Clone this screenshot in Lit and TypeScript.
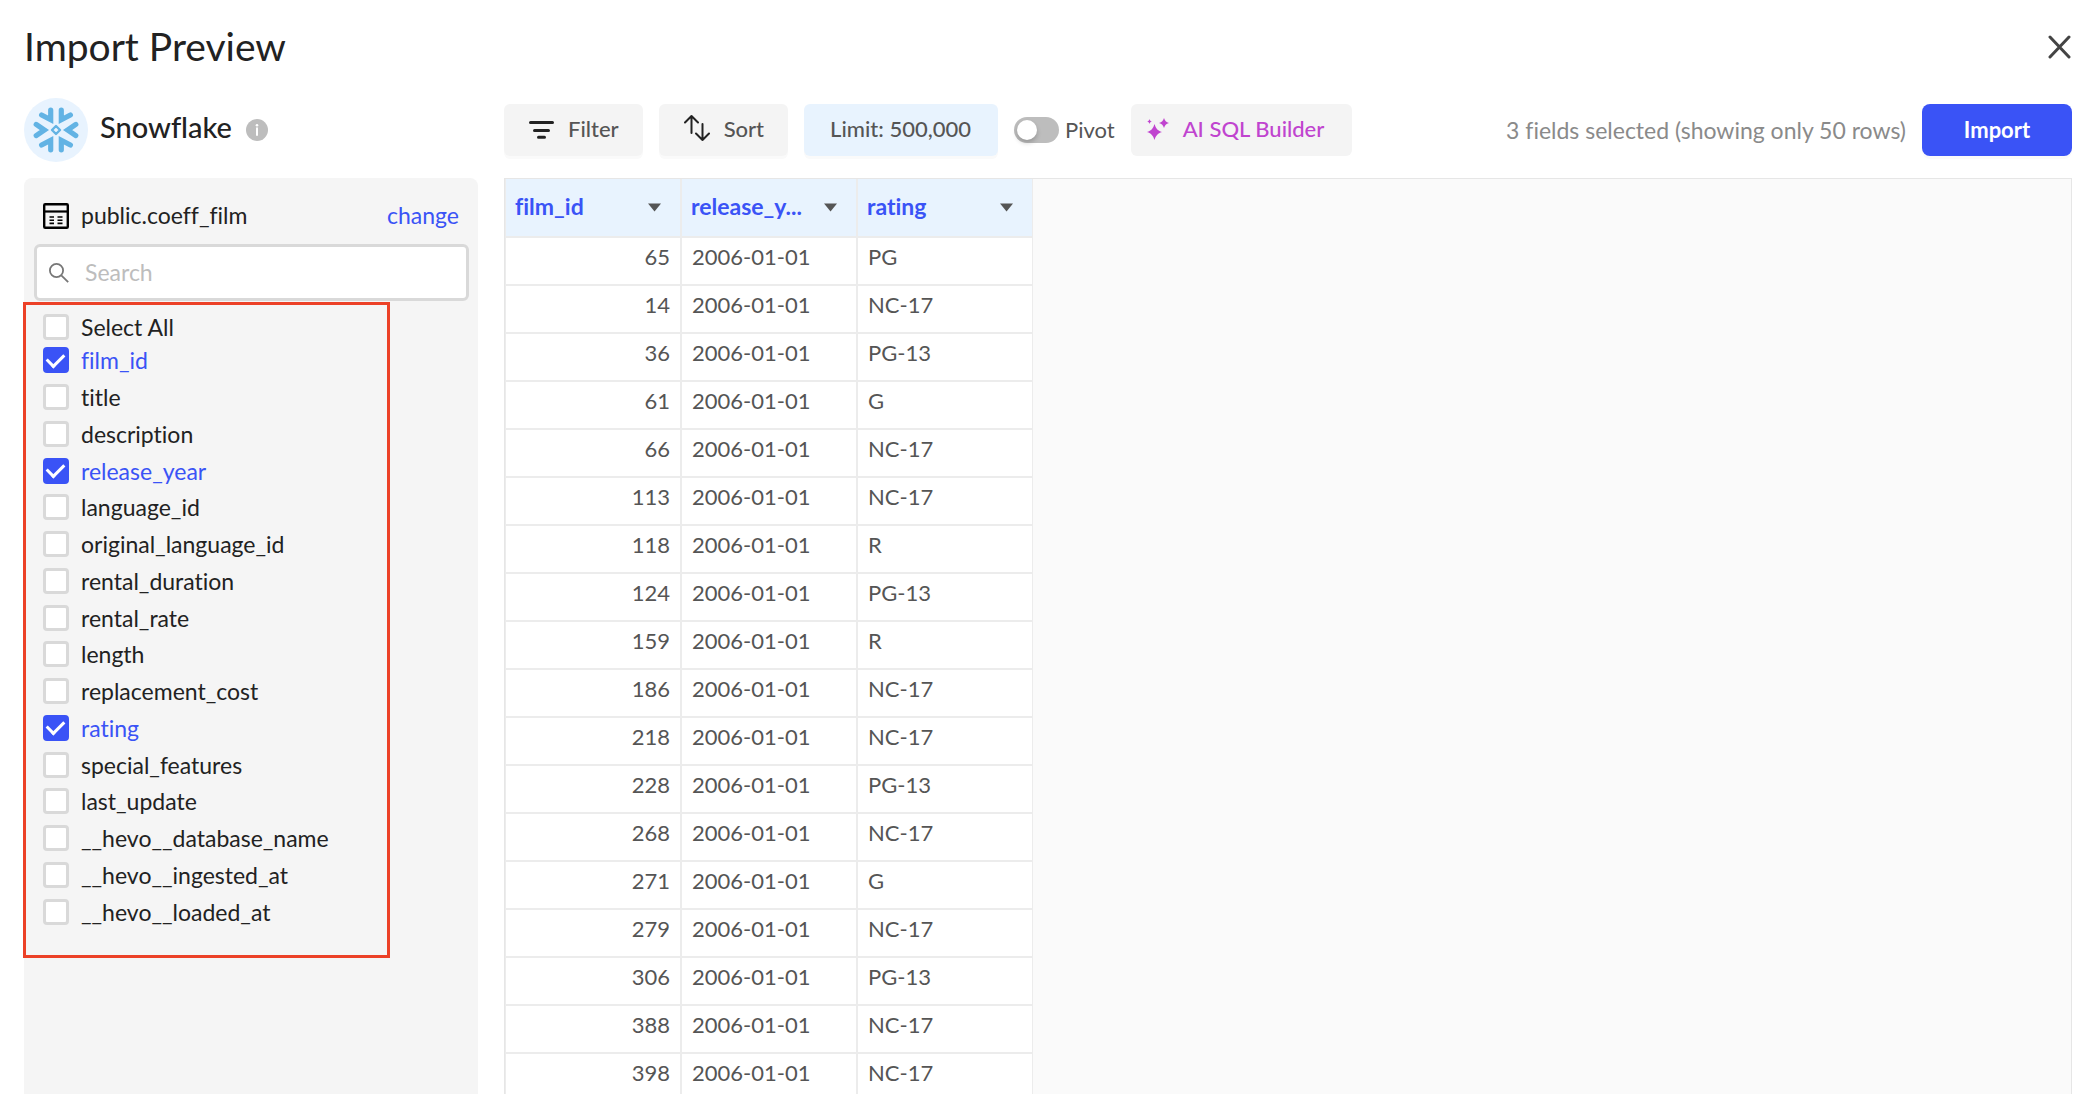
import { LitElement, html, css, svg } from "lit";
import { customElement, state } from "lit/decorators.js";
import { classMap } from "lit/directives/class-map.js";

interface Field {
  name: string;
  selected: boolean;
}

const FIELDS: Field[] = [
  { name: "film_id", selected: true },
  { name: "title", selected: false },
  { name: "description", selected: false },
  { name: "release_year", selected: true },
  { name: "language_id", selected: false },
  { name: "original_language_id", selected: false },
  { name: "rental_duration", selected: false },
  { name: "rental_rate", selected: false },
  { name: "length", selected: false },
  { name: "replacement_cost", selected: false },
  { name: "rating", selected: true },
  { name: "special_features", selected: false },
  { name: "last_update", selected: false },
  { name: "__hevo__database_name", selected: false },
  { name: "__hevo__ingested_at", selected: false },
  { name: "__hevo__loaded_at", selected: false },
];

const ROWS: [number, string][] = [
  [65, "PG"],
  [14, "NC-17"],
  [36, "PG-13"],
  [61, "G"],
  [66, "NC-17"],
  [113, "NC-17"],
  [118, "R"],
  [124, "PG-13"],
  [159, "R"],
  [186, "NC-17"],
  [218, "NC-17"],
  [228, "PG-13"],
  [268, "NC-17"],
  [271, "G"],
  [279, "NC-17"],
  [306, "PG-13"],
  [388, "NC-17"],
  [398, "NC-17"],
];

const RELEASE_DATE = "2006-01-01";

/* Column headings hold nine characters before they are shortened. */
const HEADING_LENGTH = 9;
const shorten = (name: string) =>
  name.length > HEADING_LENGTH ? `${name.slice(0, HEADING_LENGTH)}...` : name;

/* Six blades around a small diamond. */
const snowflakeIcon = html`
  <svg class="logo" viewBox="0 0 64 64" aria-hidden="true">
    <circle cx="32" cy="32" r="32" fill="#e8f3fe" />
    <g fill="none" stroke="#62b3e4" stroke-width="5.2" stroke-linecap="round" stroke-linejoin="miter">
      ${[
        "M26.7 12.2V21.8L17.6 17",
        "M37.3 12.2V21.8L46.4 17",
        "M26.7 51.8V42.2L17.6 47",
        "M37.3 51.8V42.2L46.4 47",
        "M12.2 26.4L20.4 32L12.2 37.6",
        "M51.8 26.4L43.6 32L51.8 37.6",
      ].map((d) => svg`<path d=${d} />`)}
    </g>
    <path d="M32 28L36 32L32 36L28 32Z" fill="none" stroke="#62b3e4" stroke-width="2.4" stroke-linejoin="round" />
  </svg>
`;

@customElement("app-root")
export class AppRoot extends LitElement {
  @state() private fields: Field[] = FIELDS;

  static styles = css`
    :host {
      display: block;
      height: 100vh;
      overflow: hidden;
      background: #fff;
      color: #222;
      font-family: Lato, "Liberation Sans", sans-serif;
      font-size: 22px;
      line-height: 26px;
      font-variant-ligatures: none;
    }
    * {
      box-sizing: border-box;
    }
    button,
    input {
      font: inherit;
      font-variant-ligatures: none;
      color: inherit;
      margin: 0;
    }
    button {
      border: 0;
      cursor: pointer;
    }
    svg {
      display: block;
      flex: none;
    }
    .page {
      display: flex;
      flex-direction: column;
      height: 100%;
      padding: 0 20px 0 24px;
    }
    .titlebar {
      display: flex;
      align-items: center;
      justify-content: space-between;
      height: 94px;
    }
    h1 {
      margin: 0;
      padding-bottom: 2px;
      font-size: 39px;
      line-height: 48px;
      font-weight: 400;
    }
    .close {
      padding: 0;
      background: none;
    }
    .body {
      flex: 1;
      min-height: 0;
      display: grid;
      grid-template-columns: 454px minmax(0, 1fr);
      grid-template-rows: 84px minmax(0, 1fr);
      column-gap: 26px;
    }
    .source {
      display: flex;
      align-items: center;
      height: 72px;
    }
    .logo {
      width: 64px;
      height: 64px;
    }
    .source h2 {
      margin: 0 14px 0 12px;
      padding-bottom: 6px;
      font-size: 29px;
      line-height: 36px;
      font-weight: 500;
    }
    .toolbar {
      display: flex;
      align-items: center;
      gap: 16px;
      height: 72px;
      color: #555;
      font-weight: 500;
    }
    .tool {
      display: flex;
      align-items: center;
      gap: 14px;
      height: 52px;
      padding: 0 24px 2px 25px;
      border-radius: 6px;
      background: #f4f4f4;
      box-shadow: 0 3px 0 #fafafa;
      white-space: nowrap;
    }
    .tool.limit {
      padding: 0 27px 2px 26px;
      background: #e8f3fe;
    }
    .tool.ai {
      padding: 0 28px 2px 16px;
      color: #c044cf;
      box-shadow: none;
    }
    .pivot {
      display: flex;
      align-items: center;
      gap: 6px;
      font-weight: 400;
    }
    .switch {
      appearance: none;
      display: flex;
      align-items: center;
      width: 45px;
      height: 26px;
      padding: 3px;
      border-radius: 13px;
      background: #bdbdbd;
    }
    .switch::before {
      content: "";
      width: 20px;
      height: 20px;
      border-radius: 50%;
      background: #fff;
      box-shadow: 0 3px 5px #0003;
    }
    .switch:checked::before {
      margin-left: auto;
    }
    .summary {
      margin-left: auto;
      color: #8a8a8a;
      font-size: 23px;
      font-weight: 400;
      white-space: nowrap;
    }
    .import {
      width: 150px;
      height: 52px;
      border-radius: 8px;
      background: #3a53f6;
      box-shadow: 0 3px 0 #fafafa;
      color: #fff;
      font-weight: 700;
    }
    .sidebar {
      padding: 22px 9px 0 10px;
      border-radius: 8px 8px 0 0;
      background: #f5f5f5;
      font-size: 23px;
    }
    .source-table {
      display: flex;
      align-items: center;
      gap: 12px;
      height: 32px;
      padding: 0 10px 0 9px;
    }
    .source-table span,
    .change {
      padding-bottom: 2px;
    }
    .change {
      margin-left: auto;
      color: #3a53f6;
      text-decoration: none;
    }
    .search {
      display: flex;
      align-items: center;
      gap: 16px;
      height: 57px;
      margin-top: 12px;
      padding: 0 12px;
      border: 3px solid #d9d9d9;
      border-radius: 6px;
      background: #fff;
    }
    .search input {
      flex: 1;
      min-width: 0;
      padding: 0 0 2px;
      border: 0;
      outline: 0;
      background: none;
    }
    .search input::placeholder {
      color: #bdbdbd;
      opacity: 1;
    }
    .fields {
      position: relative;
      padding: 13px 9px 28px;
    }
    .highlight {
      position: absolute;
      inset: 1px auto 0 -11px;
      width: 367px;
      border: 3px solid #ec4127;
      pointer-events: none;
    }
    .field-list {
      display: grid;
      grid-auto-rows: 1fr;
      min-height: 588px;
      margin: 2px 0 0;
      padding: 0;
      list-style: none;
    }
    .field-list li {
      display: flex;
      align-items: center;
    }
    .field {
      display: flex;
      align-items: center;
      gap: 12px;
    }
    .field.on {
      color: #3a53f6;
    }
    .check {
      appearance: none;
      flex: none;
      display: grid;
      place-items: center;
      width: 26px;
      height: 26px;
      border: 3px solid #d9d9d9;
      border-radius: 4px;
      background: #fff;
    }
    .check:checked {
      border-color: #3a53f6;
      background: #3a53f6;
    }
    .check:checked::before {
      content: "";
      width: 14px;
      height: 8px;
      margin: 0 1px 4px 0;
      border: solid #fff;
      border-width: 0 0 3px 3px;
      transform: rotate(-45deg);
    }
    .preview {
      overflow: hidden;
      border: solid #e6e6e6;
      border-width: 1px 1px 0;
      background: #fafafa;
    }
    table {
      table-layout: fixed;
      width: 528px;
      border-left: 1px solid #ececec;
      border-collapse: separate;
      border-spacing: 0;
      background: #fff;
      color: #555;
    }
    th,
    td {
      width: 176px;
      padding: 0 10px;
      border: solid #ececec;
      border-width: 0 2px 2px 0;
      text-align: left;
    }
    th:last-child,
    td:last-child {
      width: 175px;
      border-right-width: 1px;
    }
    th {
      height: 59px;
      padding: 0 10px 1px 9px;
      background: #e8f3fe;
      color: #3a53f6;
      font-size: 23px;
      font-weight: 700;
    }
    td {
      height: 48px;
      padding-bottom: 8px;
    }
    .num {
      text-align: right;
    }
    .head {
      display: flex;
      align-items: center;
      justify-content: space-between;
      padding-right: 9px;
      white-space: nowrap;
    }
    .head span {
      padding-bottom: 2px;
    }
    .menu {
      padding: 0;
      background: none;
    }
  `;

  private toggle(index: number) {
    this.fields = this.fields.map((f, i) => (i === index ? { ...f, selected: !f.selected } : f));
  }

  private toggleAll(e: Event) {
    const selected = (e.target as HTMLInputElement).checked;
    this.fields = this.fields.map((f) => ({ ...f, selected }));
  }

  private renderHeader(name: string) {
    return html`
      <th scope="col">
        <div class="head">
          <span>${shorten(name)}</span>
          <button class="menu" type="button" aria-label="Column options">
            <svg width="13" height="9" viewBox="0 0 13 9"><path d="M0 .5H13L6.5 8.5Z" fill="#555" /></svg>
          </button>
        </div>
      </th>
    `;
  }

  render() {
    const count = this.fields.filter((f) => f.selected).length;
    return html`
      <div class="page">
        <header class="titlebar">
          <h1>Import Preview</h1>
          <button class="close" type="button" aria-label="Close">
            <svg width="24" height="24" viewBox="0 0 24 24">
              <path d="M2 2L21 22M21 2L2 22" stroke="#444" stroke-width="3" stroke-linecap="round" />
            </svg>
          </button>
        </header>
        <main class="body">
          <div class="source">
            ${snowflakeIcon}
            <h2>Snowflake</h2>
            <svg width="22" height="22" viewBox="0 0 22 22" aria-hidden="true">
              <circle cx="11" cy="11" r="11" fill="#bdbdbd" />
              <path d="M11 9.2V16" stroke="#fff" stroke-width="2" stroke-linecap="round" />
              <circle cx="11" cy="6.2" r="1.3" fill="#fff" />
            </svg>
          </div>
          <div class="toolbar">
            <button class="tool" type="button">
              <svg width="25" height="20" viewBox="0 0 25 20" aria-hidden="true">
                <path d="M1.5 3.5H23.5M5.5 11.5H19.5M9.5 18.3H15.5" stroke="#222" stroke-width="3" stroke-linecap="round" />
              </svg>
              Filter
            </button>
            <button class="tool" type="button">
              <svg width="26" height="32" viewBox="0 0 26 32" aria-hidden="true">
                <path
                  d="M7.500 20V3.500M1 9.500L7.500 3L14 9.500M18.500 11V27M12 20.500L18.500 27L25 20.500"
                  fill="none"
                  stroke="#222"
                  stroke-width="2"
                  stroke-linecap="round"
                  stroke-linejoin="round"
                />
              </svg>
              Sort
            </button>
            <button class="tool limit" type="button">Limit: 500,000</button>
            <label class="pivot"><input class="switch" type="checkbox" role="switch" />Pivot</label>
            <button class="tool ai" type="button">
              <svg width="22" height="22" viewBox="0 0 22 22" aria-hidden="true">
                <g fill="#c044cf">
                  <path d="M7.500 6C8.900 10.500 10.500 12.500 15 14C10.500 15.500 8.900 17.500 7.500 22C6.100 17.500 4.500 15.500 0 14C4.500 12.500 6.100 10.500 7.500 6Z" />
                  <path d="M17 0C17.900 2.800 19 4.100 22 5C19 5.900 17.900 7.200 17 10C16.100 7.200 15 5.900 12 5C15 4.100 16.100 2.800 17 0Z" />
                  <path d="M2.500 1C2.900 2.500 3.600 3.200 5 3.500C3.600 3.800 2.900 4.500 2.500 6C2.100 4.500 1.400 3.800 0 3.500C1.400 3.200 2.100 2.500 2.500 1Z" />
                </g>
              </svg>
              AI SQL Builder
            </button>
            <span class="summary">${count} fields selected (showing only 50 rows)</span>
            <button class="import" type="button">Import</button>
          </div>
          <aside class="sidebar">
            <div class="source-table">
              <svg width="26" height="26" viewBox="0 0 26 26" aria-hidden="true">
                <rect x="1.200" y="1.200" width="23.600" height="23.600" rx="1" fill="none" stroke="#000" stroke-width="2.400" />
                <path d="M1 8.500H25" stroke="#000" stroke-width="2.200" />
                <path
                  d="M6.500 14H11M14.500 14H19.500M6.500 17.200H11M14.500 17.200H19.500M6.500 20.400H11M14.500 20.400H19.500"
                  stroke="#000"
                  stroke-width="1.600"
                />
              </svg>
              <span>public.coeff_film</span>
              <a class="change" href="#change">change</a>
            </div>
            <label class="search">
              <svg width="20" height="20" viewBox="0 0 20 20" aria-hidden="true">
                <circle cx="7.500" cy="7.500" r="6.600" fill="none" stroke="#777" stroke-width="1.800" />
                <path d="M12.300 12.300L19.200 19.200" stroke="#777" stroke-width="1.800" />
              </svg>
              <input type="search" placeholder="Search" aria-label="Search" />
            </label>
            <div class="fields">
              <label class="field">
                <input
                  class="check"
                  type="checkbox"
                  .checked=${count === this.fields.length}
                  @change=${this.toggleAll}
                />Select All
              </label>
              <ul class="field-list">
                ${this.fields.map(
                  (f, i) => html`
                    <li>
                      <label class=${classMap({ field: true, on: f.selected })}>
                        <input class="check" type="checkbox" .checked=${f.selected} @change=${() => this.toggle(i)} />${f.name}
                      </label>
                    </li>
                  `
                )}
              </ul>
              <div class="highlight"></div>
            </div>
          </aside>
          <section class="preview">
            <table>
              <thead>
                <tr>
                  ${["film_id", "release_year", "rating"].map((name) => this.renderHeader(name))}
                </tr>
              </thead>
              <tbody>
                ${ROWS.map(
                  ([id, rating]) => html`
                    <tr>
                      <td class="num">${id}</td>
                      <td>${RELEASE_DATE}</td>
                      <td>${rating}</td>
                    </tr>
                  `
                )}
              </tbody>
            </table>
          </section>
        </main>
      </div>
    `;
  }
}
